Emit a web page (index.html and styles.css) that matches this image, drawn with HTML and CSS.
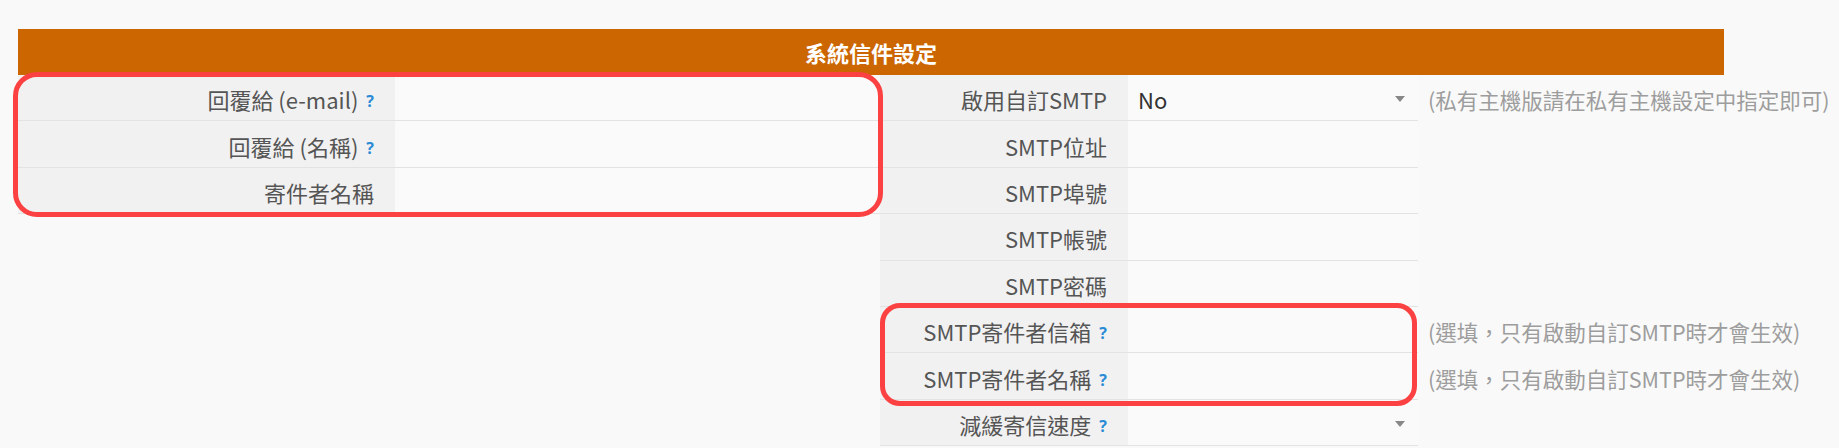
FILE: index.html
```html
<!DOCTYPE html>
<html lang="zh-Hant">

<head>
    <meta charset="UTF-8">
    <meta name="viewport" content="width=device-width, initial-scale=1.0">
    <title>系統信件設定</title>
    <link rel="stylesheet" href="styles.css">
</head>

<body>
    <div class="panel">
        <div class="panel-title">系統信件設定</div>
        <div class="panel-body">
            <!-- left column -->
            <div class="form-left">
                <div class="highlight hl-left">
                    <div class="row">
                        <div class="label">回覆給 (e-mail) <span class="help">?</span></div>
                        <div class="value"></div>
                    </div>
                    <div class="row">
                        <div class="label">回覆給 (名稱) <span class="help">?</span></div>
                        <div class="value"></div>
                    </div>
                    <div class="row">
                        <div class="label">寄件者名稱</div>
                        <div class="value"></div>
                    </div>
                </div>
            </div>

            <!-- right column -->
            <div class="form-right">
                <div class="row">
                    <div class="label">啟用自訂SMTP</div>
                    <div class="value select">No<span class="caret"></span></div>
                    <div class="note">(私有主機版請在私有主機設定中指定即可)</div>
                </div>
                <div class="row">
                    <div class="label">SMTP位址</div>
                    <div class="value"></div>
                </div>
                <div class="row">
                    <div class="label">SMTP埠號</div>
                    <div class="value"></div>
                </div>
                <div class="row">
                    <div class="label">SMTP帳號</div>
                    <div class="value"></div>
                </div>
                <div class="row">
                    <div class="label">SMTP密碼</div>
                    <div class="value"></div>
                </div>
                <div class="highlight hl-right">
                    <div class="row">
                        <div class="label">SMTP寄件者信箱 <span class="help">?</span></div>
                        <div class="value"></div>
                        <div class="note">(選填，只有啟動自訂SMTP時才會生效)</div>
                    </div>
                    <div class="row">
                        <div class="label">SMTP寄件者名稱 <span class="help">?</span></div>
                        <div class="value"></div>
                        <div class="note">(選填，只有啟動自訂SMTP時才會生效)</div>
                    </div>
                </div>
                <div class="row">
                    <div class="label">減緩寄信速度 <span class="help">?</span></div>
                    <div class="value select"><span class="caret"></span></div>
                </div>
            </div>
        </div>
    </div>
</body>
</html>
```

FILE: styles.css
```css
body {
    margin: 0;
    background-color: #f9f9f9;
    font-family: "Noto Sans CJK TC", "Noto Sans", sans-serif;
    font-size: 22px;
    color: #555;
}

.panel {
    width: 1706px;
    margin: 29px 0 0 18px;
}

.panel-title {
    background-color: #cc6600;
    color: white;
    font-weight: bold;
    font-size: 22px;
    text-align: center;
    height: 46px;
    line-height: 46px;
}

.panel-body {
    display: flex;
    align-items: flex-start;
}

.form-left {
    width: 862px;
}

.form-left .row {
    grid-template-columns: 377px 485px;
}

.form-right .row {
    grid-template-columns: 248px 290px auto;
}

.row {
    display: grid;
    height: 46.4px;
}

.label,
.value {
    box-sizing: border-box;
    border-bottom: 1px solid #e3e3e3;
    display: flex;
    align-items: center;
}

.label {
    background-color: #f1f1f1;
    justify-content: flex-end;
    padding: 3px 21px 0 0;
    white-space: nowrap;
}

.value {
    background-color: #fafafa;
    padding: 3px 10px 0 10px;
    color: #333;
}

.help {
    color: #2a8bd6;
    font-family: "Open Sans", sans-serif;
    font-weight: bold;
    font-size: 16px;
    margin-left: 8px;
    padding-top: 4px;
}

.select {
    justify-content: space-between;
}

.caret {
    margin-left: auto;
    margin-right: 3px;
    width: 0;
    height: 0;
    border-left: 5px solid transparent;
    border-right: 5px solid transparent;
    border-top: 6px solid #888;
}

.note {
    color: #9d9d9d;
    font-size: 21.5px;
    padding: 3px 0 0 10px;
    display: flex;
    align-items: center;
    white-space: nowrap;
}

/* red annotation frames */
.highlight {
    position: relative;
}

.highlight::after {
    content: '';
    position: absolute;
    box-sizing: border-box;
    border: 5px solid #fb4141;
    pointer-events: none;
}

.hl-left::after {
    left: -5px;
    top: -3px;
    width: 870px;
    height: 145px;
    border-radius: 24px;
}

.hl-right::after {
    left: 0;
    top: -4px;
    width: 537px;
    height: 103px;
    border-radius: 20px;
}
```
